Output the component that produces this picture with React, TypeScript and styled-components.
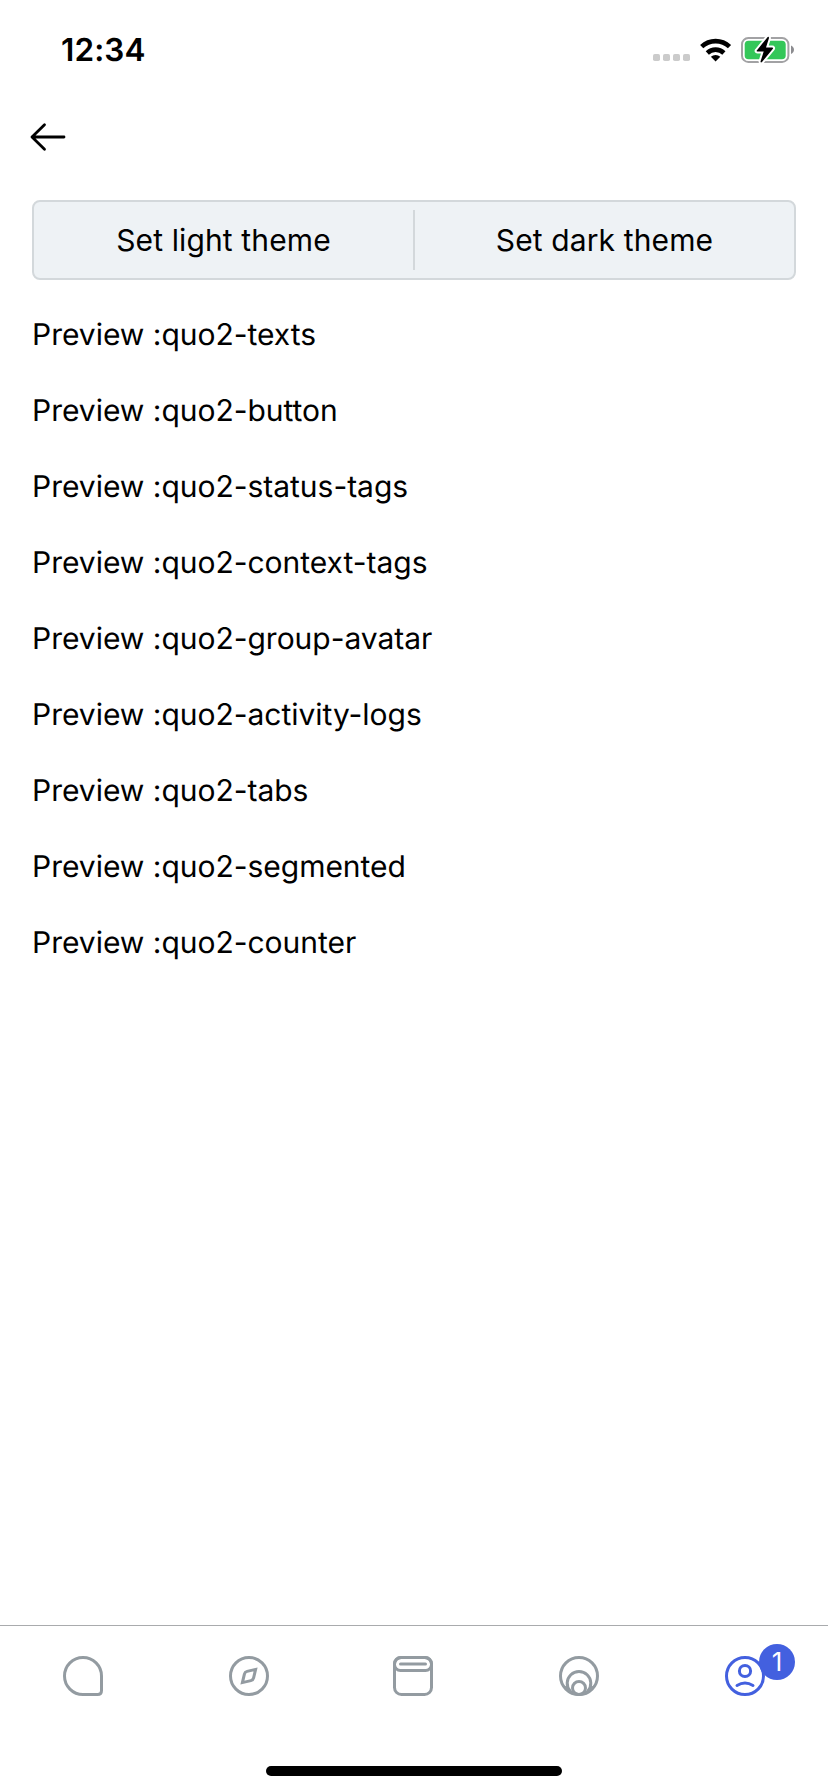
import React from 'react';
import styled, { createGlobalStyle } from 'styled-components';

const GlobalStyle = createGlobalStyle`
  * { box-sizing: border-box; }
  body { margin: 0; background: #fff; }
`;

const Screen = styled.div`
  display: flex;
  flex-direction: column;
  width: 828px;
  height: 1792px;
  background: #fff;
  color: #000;
  font-family: Inter, 'Liberation Sans', sans-serif;
  font-size: 30px;
  text-rendering: geometricPrecision;
`;

const StatusBar = styled.header`
  display: flex;
  justify-content: space-between;
  height: 88px;
  padding: 30px 33px 0 61px;
`;

const Time = styled.span`
  font-size: 31.5px;
  font-weight: 600;
  line-height: 39px;
  letter-spacing: 0.1px;
`;

const TopBar = styled.nav`
  display: flex;
  align-items: center;
  height: 112px;
  padding: 0 28px 14px;
`;

const IconButton = styled.button`
  display: flex;
  padding: 0;
  border: 0;
  background: none;
`;

const Main = styled.main`
  flex: 1;
  padding: 0 32px;
`;

const ThemeSwitch = styled.div`
  display: flex;
  align-items: center;
  height: 80px;
  border: 2px solid #d3d8db;
  border-radius: 8px;
  background: #eef2f5;
`;

const ThemeButton = styled.button`
  flex: 1;
  padding: 0;
  border: 0;
  background: none;
  color: inherit;
  font: inherit;
  line-height: 44px;
  letter-spacing: 0.12px;
`;

const Divider = styled.span`
  width: 2px;
  height: 60px;
  background: #d3d8db;
`;

const PreviewList = styled.ul`
  display: flex;
  flex-direction: column;
  margin: 17px 0 0;
  padding: 0;
  list-style: none;
`;

const PreviewItem = styled.li`
  height: 76px;
  line-height: 76px;
  letter-spacing: -0.02px;
  white-space: nowrap;
`;

const TabBar = styled.nav`
  display: grid;
  grid-template-columns: 166px 166px 162px 170px 162px;
  height: 141px;
  padding-top: 30px;
  border-top: 1px solid #a9abad;
`;

const Tab = styled.div<{ $active?: boolean }>`
  position: relative;
  display: flex;
  justify-content: center;
  height: 40px;
  color: ${(p) => (p.$active ? '#4360df' : '#939ba1')};
`;

const Badge = styled.span`
  position: absolute;
  top: -12px;
  left: 95px;
  width: 36px;
  height: 36px;
  border-radius: 50%;
  background: #4360df;
  color: #fff;
  font-size: 26px;
  line-height: 37px;
  text-align: center;
`;

const HomeArea = styled.footer`
  display: flex;
  justify-content: center;
  height: 26px;
`;

const HomeIndicator = styled.span`
  width: 296px;
  height: 10px;
  border-radius: 5px;
  background: #000;
`;

const StatusIcons = () => (
  <svg width="142" height="36" viewBox="0 0 142 36">
    <g fill="#cbcbcb">
      {[0, 10, 20, 30].map((x) => (
        <rect key={x} x={x} y="24" width="7" height="7" rx="1.8" />
      ))}
    </g>
    <path d="M62.6 31.4 L57.9 26.8 A6.8 6.8 0 0 1 67.3 26.8 Z" />
    <g fill="none" stroke="#000" strokeWidth="4.6">
      <path d="M54.3 23 A12 12 0 0 1 70.9 23" />
      <path d="M48.7 16.7 A20.2 20.2 0 0 1 76.5 16.7" />
    </g>
    <rect x="89" y="8" width="46.4" height="24" rx="6.3" fill="none" stroke="#a2a2a4" strokeWidth="2" />
    <rect x="91.7" y="10.7" width="41" height="18.6" rx="3.8" fill="#34c759" />
    <path d="M138 15.5 v8.6 c1.8-.8 3-2.4 3-4.3s-1.2-3.5-3-4.3z" fill="#8c8c90" />
    <path
      d="M114.7 7 L103.8 20.4 Q103.2 21.4 104.3 21.4 H110.7 L107.5 31.5 Q107.7 33 109 32 L119.9 18.7 Q120.5 17.6 119.3 17.6 H113 L116 8 Q115.9 6.2 114.7 7 Z"
      stroke="#fff"
      strokeWidth="4"
      paintOrder="stroke"
      strokeLinejoin="round"
    />
  </svg>
);

const BackIcon = () => (
  <svg width="40" height="32" viewBox="0 0 40 32" fill="none" stroke="#000" strokeWidth="2.8" strokeLinecap="round" strokeLinejoin="round">
    <path d="M16.5 3.8 L4 16 L16.5 28.2 M4 16 H36" />
  </svg>
);

const icons = {
  chat: <path d="M20 1.5 A18.5 18.5 0 0 0 20 38.5 H34.5 Q38.5 38.5 38.5 34.5 V20 A18.5 18.5 0 0 0 20 1.5 Z" />,
  browser: (
    <>
      <circle cx="20" cy="20" r="18.5" />
      <path d="M26.6 13.4 L18.1 15.4 Q15.9 15.9 15.4 18.1 L13.4 26.6 L21.9 24.6 Q24.1 24.1 24.6 21.9 Z" />
    </>
  ),
  wallet: (
    <>
      <rect x="1.5" y="1.5" width="37" height="37" rx="7" />
      <rect x="1.5" y="1.5" width="37" height="13" rx="6" />
      <path d="M7.5 8 H32.5" strokeLinecap="round" />
    </>
  ),
  status: (
    <>
      <circle cx="20" cy="20" r="18.5" />
      <path d="M11.06 35 A11.8 11.8 0 1 1 28.94 35" />
      <circle cx="20" cy="32" r="6.5" />
      <path d="M6 30.5 C7.5 33 9.5 34.5 13.5 37 M34 30.5 C32.5 33 30.5 34.5 26.5 37" />
    </>
  ),
  profile: (
    <>
      <circle cx="20" cy="20" r="18.5" />
      <circle cx="20" cy="15" r="5.6" />
      <path d="M12 29.5 Q20 24.7 28 29.5" strokeLinecap="round" />
    </>
  ),
};

type IconName = keyof typeof icons;

const TabIcon = ({ name }: { name: IconName }) => (
  <svg width="40" height="40" viewBox="0 0 40 40" fill="none" stroke="currentColor" strokeWidth="3">
    {icons[name]}
  </svg>
);

const tabs: { name: IconName; count?: number }[] = [
  { name: 'chat' },
  { name: 'browser' },
  { name: 'wallet' },
  { name: 'status' },
  { name: 'profile', count: 1 },
];

const previews = [
  'texts',
  'button',
  'status-tags',
  'context-tags',
  'group-avatar',
  'activity-logs',
  'tabs',
  'segmented',
  'counter',
];

export default function App() {
  return (
    <>
      <GlobalStyle />
      <Screen>
        <StatusBar>
          <Time>12:34</Time>
          <StatusIcons />
        </StatusBar>
        <TopBar>
          <IconButton aria-label="Back">
            <BackIcon />
          </IconButton>
        </TopBar>
        <Main>
          <ThemeSwitch>
            <ThemeButton>Set light theme</ThemeButton>
            <Divider />
            <ThemeButton>Set dark theme</ThemeButton>
          </ThemeSwitch>
          <PreviewList>
            {previews.map((name) => (
              <PreviewItem key={name}>{`Preview :quo2-${name}`}</PreviewItem>
            ))}
          </PreviewList>
        </Main>
        <TabBar>
          {tabs.map(({ name, count }) => (
            <Tab key={name} $active={name === 'profile'}>
              <TabIcon name={name} />
              {count && <Badge>{count}</Badge>}
            </Tab>
          ))}
        </TabBar>
        <HomeArea>
          <HomeIndicator />
        </HomeArea>
      </Screen>
    </>
  );
}
